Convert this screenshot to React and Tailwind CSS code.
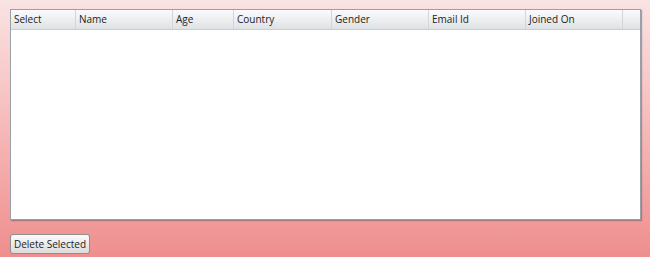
export default function App() {
  const cols = [
    ["Select", 65],
    ["Name", 97],
    ["Age", 61],
    ["Country", 98],
    ["Gender", 97],
    ["Email Id", 97],
    ["Joined On", 97],
  ];
  return (
    <div
      className="w-[650px] h-[257px] overflow-hidden bg-gradient-to-b from-[#f9e3e3] to-[#ee8e8e] pl-[10px] pt-[9px]"
      style={{ fontFamily: '"Open Sans", "Noto Sans", sans-serif' }}
    >
      <div className="w-[631px] h-[211px] border border-[#9aa0a6] bg-white flex flex-col shadow-[1px_1px_1px_rgba(90,90,110,0.5)]">
        <div className="flex h-[20px] bg-gradient-to-b from-[#fbfbfc] to-[#dfe2e5] border-b border-[#c9ced3]">
          {cols.map(([t, w]) => (
            <div
              key={t}
              className="h-full border-r border-[#d2d6da] pl-[3px] flex items-center text-[10px] text-[#222] shrink-0"
              style={{ width: w }}
            >
              {t}
            </div>
          ))}
          <div className="flex-1" />
        </div>
      </div>
      <button className="mt-[14px] h-[20px] w-[80px] justify-center rounded-[3px] border border-[#8e8f8f] bg-gradient-to-b from-[#fafafa] to-[#dcdcdc] text-[10px] text-[#222] flex items-center leading-none">
        Delete Selected
      </button>
    </div>
  );
}
